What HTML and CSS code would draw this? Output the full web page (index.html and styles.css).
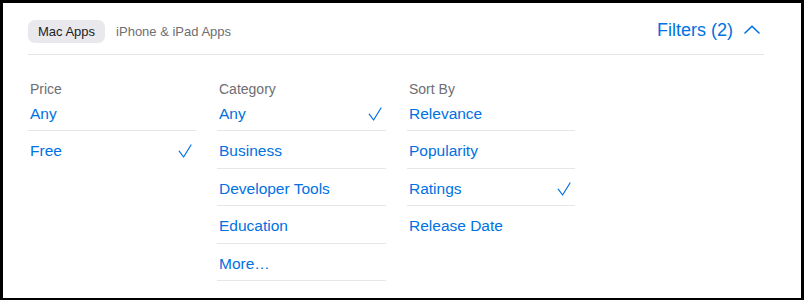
FILE: index.html
```html
<!DOCTYPE html>
<html lang="en">
<head>
<meta charset="utf-8">
<title>Filters</title>
<link rel="stylesheet" href="styles.css">
</head>
<body>
<div class="frame">
  <div class="topbar">
    <div class="tabs">
      <span class="tab tab-active">Mac Apps</span>
      <span class="tab">iPhone &amp; iPad Apps</span>
    </div>
    <div class="filters">
      <span>Filters (2)</span>
      <svg class="chevron" width="16" height="9" viewBox="0 0 16 9"><path d="M1 8 L8 1.2 L15 8" fill="none" stroke="currentColor" stroke-width="1.6" stroke-linecap="round" stroke-linejoin="round"/></svg>
    </div>
  </div>
  <div class="columns">
    <div class="col">
      <div class="label">Price</div>
      <div class="item first">Any</div>
      <div class="item last">Free<svg class="check" width="14" height="14" viewBox="0 0 14 14"><path d="M1.2 7.2 L5.6 13 L13 1" fill="none" stroke="currentColor" stroke-width="1.2" stroke-linecap="round" stroke-linejoin="round"/></svg></div>
    </div>
    <div class="col">
      <div class="label">Category</div>
      <div class="item first">Any<svg class="check" width="14" height="14" viewBox="0 0 14 14"><path d="M1.2 7.2 L5.6 13 L13 1" fill="none" stroke="currentColor" stroke-width="1.2" stroke-linecap="round" stroke-linejoin="round"/></svg></div>
      <div class="item">Business</div>
      <div class="item">Developer Tools</div>
      <div class="item">Education</div>
      <div class="item">More…</div>
    </div>
    <div class="col">
      <div class="label">Sort By</div>
      <div class="item first">Relevance</div>
      <div class="item">Popularity</div>
      <div class="item">Ratings<svg class="check" width="14" height="14" viewBox="0 0 14 14"><path d="M1.2 7.2 L5.6 13 L13 1" fill="none" stroke="currentColor" stroke-width="1.2" stroke-linecap="round" stroke-linejoin="round"/></svg></div>
      <div class="item last">Release Date</div>
    </div>
  </div>
</div>
</body>
</html>
```
FILE: styles.css
```css
html, body {
  margin: 0;
  padding: 0;
  background: #000;
}
body {
  font-family: "Liberation Sans", Arial, sans-serif;
  -webkit-font-smoothing: antialiased;
}
.frame {
  box-sizing: border-box;
  width: 804px;
  height: 300px;
  border-style: solid;
  border-color: #000;
  border-width: 3px 3px 2px 3px;
  background: #fff;
  padding: 0 37px 0 25px;
  overflow: hidden;
}
.topbar {
  display: flex;
  justify-content: space-between;
  align-items: flex-start;
  padding-top: 17px;
  padding-bottom: 11px;
  border-bottom: 1px solid #e6e6e6;
}
.tabs {
  display: flex;
  gap: 1px;
}
.tab {
  font-size: 13px;
  line-height: 23px;
  height: 23px;
  padding: 0 10px;
  border-radius: 7px;
  color: #6e6e73;
}
.tab-active {
  background: #e8e8ed;
  color: #1d1d1f;
}
.filters {
  display: flex;
  align-items: center;
  gap: 11px;
  margin-top: -1px;
  padding-right: 4px;
  font-size: 18px;
  line-height: 22px;
  color: #0071e3;
}
.chevron {
  display: block;
  margin-top: -1px;
}
.columns {
  display: grid;
  grid-template-columns: 168px 169px 168px;
  column-gap: 21px;
  padding-top: 26px;
}
.label {
  font-size: 14px;
  line-height: 16px;
  color: #6e6e73;
  padding-left: 2px;
}
.item {
  display: flex;
  align-items: center;
  justify-content: space-between;
  font-size: 15.5px;
  line-height: 20px;
  color: #0071e3;
  padding: 10px 4px 6.5px 2px;
  border-bottom: 1px solid #e6e6e6;
}
.item.first {
  padding-top: 6.5px;
}
.item.last {
  border-bottom: none;
}
.check {
  display: block;
}
```
